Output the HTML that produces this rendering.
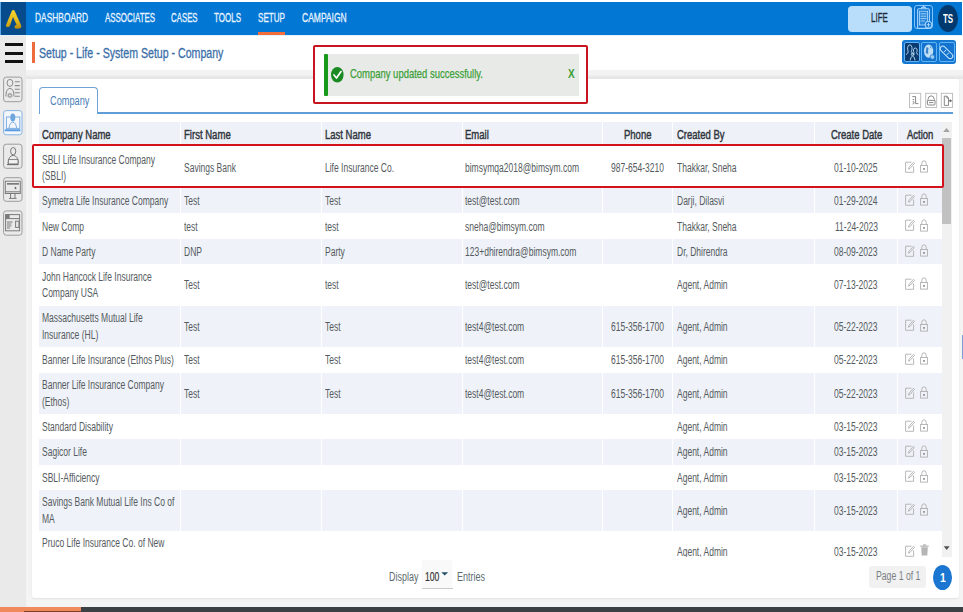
<!DOCTYPE html>
<html><head><meta charset="utf-8">
<style>
html,body{margin:0;padding:0;}
body{width:963px;height:612px;overflow:hidden;position:relative;background:#ffffff;font-family:"Liberation Sans",sans-serif;}
.a{position:absolute;}
.t{position:absolute;white-space:nowrap;line-height:1;transform-origin:0 0;font-family:"Liberation Sans",sans-serif;}
svg{position:absolute;overflow:visible;}
</style></head><body>
<!-- main gray background -->
<div class="a" style="left:26px;top:70px;width:937px;height:542px;background:#f4f4f4"></div>
<div class="a" style="left:26px;top:70px;width:937px;height:9px;background:linear-gradient(#f4f4f4,#f1f1f1 55%,#e5e5e5 85%,#e9e9e9)"></div>
<!-- navbar -->
<div class="a" style="left:0;top:2px;width:961.5px;height:32.6px;background:#0277d4"></div>
<div class="a" style="left:0;top:34.6px;width:963px;height:1.4px;background:#e3f1fc"></div>
<div class="a" style="left:0;top:2px;width:1.2px;height:33px;background:#5aa8e8"></div>
<div class="a" style="left:1.2px;top:2px;width:24.8px;height:32.6px;background:#064b8c"></div>
<svg style="left:0;top:0" width="26" height="34" viewBox="0 0 26 34">
 <defs><linearGradient id="gA" x1="0" y1="0" x2="0" y2="1"><stop offset="0" stop-color="#f6d62c"/><stop offset="0.6" stop-color="#e2b91c"/><stop offset="1" stop-color="#b98a10"/></linearGradient></defs>
 <path d="M12.0 10.6 Q13.2 9.2 14.5 10.6 L21.2 25.6 Q21.8 28.2 19.6 28.5 L16.6 28.7 Q14.4 28.7 14.4 26.9 Q14.5 25.2 16.6 25.0 L13.0 16.9 L10.0 25.4 Q9.5 26.9 7.9 27.1 Q5.4 27.3 5.9 25.3 Z" fill="url(#gA)"/>
</svg>
<div class="a" style="left:258.4px;top:31.6px;width:26.8px;height:3.2px;background:#f26d3a"></div>
<div class="a" style="left:848px;top:6px;width:64px;height:26px;background:#b9defb;border-radius:4px"></div>
<div class="a" style="left:914.4px;top:4.6px;width:16.2px;height:22.9px;border:1.7px solid #80c3fb;border-radius:3px;background:#0b74d2"></div>
<svg style="left:908px;top:2px" width="30" height="32" viewBox="908 2 30 32">
 <g fill="none" stroke="#a6d6ff" stroke-width="1.1">
  <rect x="917.6" y="8.8" width="11.8" height="19.6" rx="1.2"/>
  <path d="M921 8.8 L922 7.4 L923 7.4 L923.6 6 L924.3 7.4 L925.3 7.4 L926.2 8.8"/>
 </g>
 <rect x="919.4" y="11.2" width="8.2" height="13.8" fill="#2a86d8" stroke="#a6d6ff" stroke-width="0.9"/>
 <path d="M920.6 13.8h5.8 M920.6 16.2h5.8 M920.6 18.6h5.8 M920.6 21h4" stroke="#a6d6ff" stroke-width="0.9"/>
 <circle cx="928.5" cy="24.8" r="3.3" fill="#0b74d2" stroke="#a6d6ff" stroke-width="1.1"/>
 <path d="M928.5 22.9v3.8 M926.6 24.8h3.8" stroke="#a6d6ff" stroke-width="1"/>
</svg>
<div class="a" style="left:938.2px;top:5px;width:20px;height:27px;border-radius:50%;background:#023a6f"></div>

<!-- sidebar -->
<div class="a" style="left:0;top:36px;width:26px;height:571.4px;background:#eaeaea"></div>
<div class="a" style="left:4.5px;top:43.3px;width:18.7px;height:3.2px;background:#111"></div>
<div class="a" style="left:4.5px;top:51.8px;width:18.7px;height:3.2px;background:#111"></div>
<div class="a" style="left:4.5px;top:60.3px;width:18.7px;height:3.2px;background:#111"></div>
<!-- sidebar icons -->
<svg style="left:0;top:70px" width="26" height="170" viewBox="0 70 26 170">
 <g fill="none" stroke="#9c9c9c" stroke-width="1">
  <rect x="3.6" y="77.1" width="18.4" height="24.6" rx="2.6"/>
  <rect x="3.6" y="144.2" width="18.4" height="24.1" rx="2.6"/>
  <rect x="3.6" y="177.7" width="18.4" height="23.6" rx="2.6"/>
  <rect x="3.6" y="210.9" width="18.4" height="24.3" rx="2.6"/>
 </g>
 <rect x="3.6" y="110.6" width="18.4" height="24.2" rx="2.6" fill="#f3f6fa" stroke="#86b3e3" stroke-width="1"/>
 <!-- icon1 -->
 <g fill="none" stroke="#8a8a8a" stroke-width="1">
  <ellipse cx="9.95" cy="82.9" rx="2.9" ry="3.5"/>
  <path d="M5.9 96.5 Q5.9 88.6 9.95 88.4 Q14 88.6 14 96.5"/>
  <path d="M14.8 81.8h5 M14.8 85.6h5 M14.8 89.2h5 M14.8 92.8h5 M14.8 96.2h5" stroke-width="1.1"/>
 </g>
 <circle cx="9.9" cy="95.4" r="2.6" fill="#9a9a9a" stroke="#eaeaea" stroke-width="0.6"/>
 <circle cx="9.9" cy="95.4" r="1" fill="#eaeaea"/>
 <!-- icon2 -->
 <rect x="6.4" y="117" width="13.4" height="11.4" fill="none" stroke="#7fb0e4" stroke-width="1"/>
 <ellipse cx="12.8" cy="117.6" rx="2.5" ry="4" fill="#6fa5de"/>
 <path d="M9 128.2 Q9.6 122.4 12.8 122.2 Q16 122.4 16.6 128.2" fill="none" stroke="#7fb0e4" stroke-width="1"/>
 <rect x="4.7" y="129.2" width="15.7" height="2.1" fill="#5c9de2"/>
 <!-- icon3 -->
 <g fill="none" stroke="#7a7a7a" stroke-width="1">
  <ellipse cx="13.2" cy="151.2" rx="2.6" ry="3.7"/>
  <path d="M8 163.5 Q8.5 155.5 13.2 155.3 Q17.9 155.5 18.4 163.5"/>
 </g>
 <rect x="8.4" y="159.6" width="9.6" height="4.3" fill="#f2f2f2" stroke="#7a7a7a" stroke-width="0.9"/>
 <path d="M7 164.6h11.5" stroke="#6a6a6a" stroke-width="1.1"/>
 <!-- icon4 -->
 <g fill="none" stroke="#7a7a7a" stroke-width="1">
  <rect x="5.3" y="181.2" width="15" height="12.3"/>
  <path d="M5.3 191.8h15 M10.6 193.5v4.6 M15 193.5v4.6 M9 198.4h7.6"/>
 </g>
 <rect x="7" y="183" width="12" height="1.7" fill="#7a7a7a"/>
 <path d="M14.8 186.6 l2 1.4 -0.9 0.4 0.5 0.9 -0.5 0.2 -0.5 -0.9 -0.6 0.7z" fill="#555"/>
 <!-- icon5 -->
 <g fill="none" stroke="#7a7a7a" stroke-width="1">
  <rect x="5.6" y="214.6" width="14" height="16.2"/>
  <path d="M5.6 218.6h14"/>
  <rect x="15.6" y="221.2" width="3.3" height="6.2"/>
  <path d="M6.9 222h5.8 M6.9 224h4.5 M6.9 226h4.5 M6.9 228h3"/>
 </g>
 <rect x="5.6" y="214.6" width="4" height="4" fill="#7a7a7a"/>
</svg>
<!-- breadcrumb -->
<div class="a" style="left:32.1px;top:41.8px;width:3.3px;height:21.5px;background:#ee6b3b"></div>
<!-- top right icon group -->
<div class="a" style="left:902px;top:40px;width:54px;height:24px;background:#1477d2;border-radius:3px"></div>
<div class="a" style="left:904.1px;top:41.8px;width:13.5px;height:18.7px;border:1px solid #5eb4f6;border-radius:2px;background:#0a3a70"></div>
<div class="a" style="left:921.4px;top:41.8px;width:13.6px;height:18.7px;border:1px solid #5eb4f6;border-radius:2px;background:#1373cf"></div>
<div class="a" style="left:939.2px;top:41.8px;width:13.6px;height:18.7px;border:1px solid #5eb4f6;border-radius:2px;background:#1373cf"></div>
<svg style="left:898px;top:36px" width="62" height="30" viewBox="898 36 62 30">
 <g fill="none" stroke="#b9dcf0" stroke-width="0.9" stroke-linecap="round">
  <path d="M906.3 54.5 Q908.2 53.5 908.2 51.5 Q907.4 50 907.6 47.6 Q908 44.8 909.8 44.8 Q911.6 44.8 912 47.6 Q912.2 50 911.4 51.5 Q911.6 53 913 53.8"/>
  <path d="M912.8 55 Q914 54 914 52.6 Q913.3 51.6 913.5 49.8 Q913.8 48 915.3 48 Q916.8 48 917.1 49.8 Q917.3 51.6 916.6 52.6 Q916.6 54 918 54.8"/>
  <path d="M910.2 60 Q910.4 56.6 912.6 56.2 Q914.8 56.6 915 60"/>
  <circle cx="912.6" cy="54.3" r="1.3"/>
 </g>
 <ellipse cx="928.6" cy="51.2" rx="4.6" ry="6.6" fill="#bfdff5"/>
 <path d="M926.3 47.5 Q927.8 46.6 928.6 48.6 Q927.6 50.8 928.4 53.2 Q926.8 54.6 925.6 52.2 Q926.2 50 926.3 47.5Z M929.9 46 Q931.6 46.8 931.4 48.8 Q930.2 48.2 929.9 46Z" fill="#3d86cc"/>
 <circle cx="932.4" cy="57" r="2.3" fill="#9fcdf0" stroke="#1373cf" stroke-width="0.7"/>
 <g transform="rotate(-45 946.5 52.4)">
  <rect x="943.9" y="44.6" width="5.2" height="15.6" rx="2.6" fill="none" stroke="#c8e6fa" stroke-width="1"/>
  <path d="M944.9 50.4h3.2 M944.9 54.4h3.2" stroke="#c8e6fa" stroke-width="0.9"/>
 </g>
</svg>

<!-- panel -->
<div class="a" style="left:32.3px;top:79px;width:926.5px;height:519px;background:#ffffff;border-radius:3px;box-shadow:0 1px 2px rgba(0,0,0,0.08)"></div>
<!-- tab -->
<div class="a" style="left:38.9px;top:87.2px;width:57.3px;height:26px;border:1.5px solid #6fa3d6;border-bottom:none;border-radius:4px 4px 0 0;background:#fff"></div>
<div class="a" style="left:97.5px;top:112.1px;width:855px;height:1.6px;background:#5e9dd6"></div>
<!-- small panel icons -->
<svg style="left:900px;top:88px" width="60" height="24" viewBox="900 88 60 24">
 <g fill="none" stroke="#b9b9b9" stroke-width="0.9">
  <rect x="909.5" y="93.3" width="11.2" height="14.2"/>
  <rect x="925.7" y="93.3" width="11" height="14.2"/>
  <rect x="941.3" y="93.3" width="11.3" height="14.2"/>
 </g>
 <g fill="none" stroke="#7c7c7c" stroke-width="0.9">
  <path d="M912.3 96.6 L915.6 96.6 L915.6 103.6 L918.4 103.6 M912.6 99.6 L914.2 99.6 M914.2 101.8 L912.6 101.8 M913 104.4 Q913 102.8 914.6 102.8"/>
  <path d="M927.9 99.6 Q928.3 95.8 931.2 95.8 Q934 95.8 934.4 99.6 M927.4 100.4 h7.6 v3.6 q0 1 -1 1 h-5.6 q-1 0 -1 -1z M929 102.6 h4.4"/>
  <path d="M944.3 96.2 h2.6 l1.6 1.8 v7.4 h-4.2z M946.9 96.2 v1.8 h1.6"/>
 </g>
 <path d="M948.8 100.8 h1.8 M950.2 99.8 l1.4 1 -1.4 1z" stroke="#666" stroke-width="0.9" fill="#666"/>
</svg>

<!-- table -->
<div class="a" style="left:32px;top:121.5px;width:911px;height:435.8px;overflow:hidden">
 <div class="a" style="left:7px;top:0;width:904px;height:24px;background:#eef1f8"></div>
 <div class="a" style="left:148.00px;top:0px;width:1px;height:24px;background:#ffffff"></div>
<div class="a" style="left:288.50px;top:0px;width:1px;height:24px;background:#ffffff"></div>
<div class="a" style="left:429.50px;top:0px;width:1px;height:24px;background:#ffffff"></div>
<div class="a" style="left:570.00px;top:0px;width:1px;height:24px;background:#ffffff"></div>
<div class="a" style="left:640.00px;top:0px;width:1px;height:24px;background:#ffffff"></div>
<div class="a" style="left:782.30px;top:0px;width:1px;height:24px;background:#ffffff"></div>
<div class="a" style="left:865.30px;top:0px;width:1px;height:24px;background:#ffffff"></div>
<div class="a" style="left:148.00px;top:25.90px;width:1px;height:40.40px;background:#ffffff"></div>
<div class="a" style="left:288.50px;top:25.90px;width:1px;height:40.40px;background:#ffffff"></div>
<div class="a" style="left:429.50px;top:25.90px;width:1px;height:40.40px;background:#ffffff"></div>
<div class="a" style="left:570.00px;top:25.90px;width:1px;height:40.40px;background:#ffffff"></div>
<div class="a" style="left:640.00px;top:25.90px;width:1px;height:40.40px;background:#ffffff"></div>
<div class="a" style="left:782.30px;top:25.90px;width:1px;height:40.40px;background:#ffffff"></div>
<div class="a" style="left:865.30px;top:25.90px;width:1px;height:40.40px;background:#ffffff"></div>
<svg style="left:873.30px;top:39.20px" width="10" height="12" viewBox="0 0 10 12"><g fill="none" stroke="#ababab" stroke-width="0.85"><path d="M6.5 1.2 H0.6 V11.3 H8.6 V5.5"/><path d="M3.5 8.2 L4 6.3 L8.4 1.3 L9.5 2.3 L5.1 7.4 Z"/></g></svg>
<svg style="left:888.30px;top:38.70px" width="8" height="13" viewBox="0 0 8 13"><g fill="none" stroke="#ababab" stroke-width="0.85"><path d="M1.8 5.5 V3.4 Q1.8 0.8 4 0.8 Q6.2 0.8 6.2 3.4 V5.5"/><rect x="0.6" y="5.5" width="6.8" height="6.6"/></g><rect x="3.3" y="8" width="1.4" height="1.8" fill="#777"/></svg>
<div class="a" style="left:7.00px;top:66.30px;width:904.00px;height:25.70px;background:#eff2f8"></div>
<div class="a" style="left:148.00px;top:66.30px;width:1px;height:25.70px;background:#ffffff"></div>
<div class="a" style="left:288.50px;top:66.30px;width:1px;height:25.70px;background:#ffffff"></div>
<div class="a" style="left:429.50px;top:66.30px;width:1px;height:25.70px;background:#ffffff"></div>
<div class="a" style="left:570.00px;top:66.30px;width:1px;height:25.70px;background:#ffffff"></div>
<div class="a" style="left:640.00px;top:66.30px;width:1px;height:25.70px;background:#ffffff"></div>
<div class="a" style="left:782.30px;top:66.30px;width:1px;height:25.70px;background:#ffffff"></div>
<div class="a" style="left:865.30px;top:66.30px;width:1px;height:25.70px;background:#ffffff"></div>
<svg style="left:873.30px;top:72.25px" width="10" height="12" viewBox="0 0 10 12"><g fill="none" stroke="#ababab" stroke-width="0.85"><path d="M6.5 1.2 H0.6 V11.3 H8.6 V5.5"/><path d="M3.5 8.2 L4 6.3 L8.4 1.3 L9.5 2.3 L5.1 7.4 Z"/></g></svg>
<svg style="left:888.30px;top:71.75px" width="8" height="13" viewBox="0 0 8 13"><g fill="none" stroke="#ababab" stroke-width="0.85"><path d="M1.8 5.5 V3.4 Q1.8 0.8 4 0.8 Q6.2 0.8 6.2 3.4 V5.5"/><rect x="0.6" y="5.5" width="6.8" height="6.6"/></g><rect x="3.3" y="8" width="1.4" height="1.8" fill="#777"/></svg>
<div class="a" style="left:148.00px;top:92.00px;width:1px;height:25.30px;background:#ffffff"></div>
<div class="a" style="left:288.50px;top:92.00px;width:1px;height:25.30px;background:#ffffff"></div>
<div class="a" style="left:429.50px;top:92.00px;width:1px;height:25.30px;background:#ffffff"></div>
<div class="a" style="left:570.00px;top:92.00px;width:1px;height:25.30px;background:#ffffff"></div>
<div class="a" style="left:640.00px;top:92.00px;width:1px;height:25.30px;background:#ffffff"></div>
<div class="a" style="left:782.30px;top:92.00px;width:1px;height:25.30px;background:#ffffff"></div>
<div class="a" style="left:865.30px;top:92.00px;width:1px;height:25.30px;background:#ffffff"></div>
<svg style="left:873.30px;top:97.75px" width="10" height="12" viewBox="0 0 10 12"><g fill="none" stroke="#ababab" stroke-width="0.85"><path d="M6.5 1.2 H0.6 V11.3 H8.6 V5.5"/><path d="M3.5 8.2 L4 6.3 L8.4 1.3 L9.5 2.3 L5.1 7.4 Z"/></g></svg>
<svg style="left:888.30px;top:97.25px" width="8" height="13" viewBox="0 0 8 13"><g fill="none" stroke="#ababab" stroke-width="0.85"><path d="M1.8 5.5 V3.4 Q1.8 0.8 4 0.8 Q6.2 0.8 6.2 3.4 V5.5"/><rect x="0.6" y="5.5" width="6.8" height="6.6"/></g><rect x="3.3" y="8" width="1.4" height="1.8" fill="#777"/></svg>
<div class="a" style="left:7.00px;top:117.30px;width:904.00px;height:25.40px;background:#eff2f8"></div>
<div class="a" style="left:148.00px;top:117.30px;width:1px;height:25.40px;background:#ffffff"></div>
<div class="a" style="left:288.50px;top:117.30px;width:1px;height:25.40px;background:#ffffff"></div>
<div class="a" style="left:429.50px;top:117.30px;width:1px;height:25.40px;background:#ffffff"></div>
<div class="a" style="left:570.00px;top:117.30px;width:1px;height:25.40px;background:#ffffff"></div>
<div class="a" style="left:640.00px;top:117.30px;width:1px;height:25.40px;background:#ffffff"></div>
<div class="a" style="left:782.30px;top:117.30px;width:1px;height:25.40px;background:#ffffff"></div>
<div class="a" style="left:865.30px;top:117.30px;width:1px;height:25.40px;background:#ffffff"></div>
<svg style="left:873.30px;top:123.10px" width="10" height="12" viewBox="0 0 10 12"><g fill="none" stroke="#ababab" stroke-width="0.85"><path d="M6.5 1.2 H0.6 V11.3 H8.6 V5.5"/><path d="M3.5 8.2 L4 6.3 L8.4 1.3 L9.5 2.3 L5.1 7.4 Z"/></g></svg>
<svg style="left:888.30px;top:122.60px" width="8" height="13" viewBox="0 0 8 13"><g fill="none" stroke="#ababab" stroke-width="0.85"><path d="M1.8 5.5 V3.4 Q1.8 0.8 4 0.8 Q6.2 0.8 6.2 3.4 V5.5"/><rect x="0.6" y="5.5" width="6.8" height="6.6"/></g><rect x="3.3" y="8" width="1.4" height="1.8" fill="#777"/></svg>
<div class="a" style="left:148.00px;top:142.70px;width:1px;height:41.30px;background:#ffffff"></div>
<div class="a" style="left:288.50px;top:142.70px;width:1px;height:41.30px;background:#ffffff"></div>
<div class="a" style="left:429.50px;top:142.70px;width:1px;height:41.30px;background:#ffffff"></div>
<div class="a" style="left:570.00px;top:142.70px;width:1px;height:41.30px;background:#ffffff"></div>
<div class="a" style="left:640.00px;top:142.70px;width:1px;height:41.30px;background:#ffffff"></div>
<div class="a" style="left:782.30px;top:142.70px;width:1px;height:41.30px;background:#ffffff"></div>
<div class="a" style="left:865.30px;top:142.70px;width:1px;height:41.30px;background:#ffffff"></div>
<svg style="left:873.30px;top:156.45px" width="10" height="12" viewBox="0 0 10 12"><g fill="none" stroke="#ababab" stroke-width="0.85"><path d="M6.5 1.2 H0.6 V11.3 H8.6 V5.5"/><path d="M3.5 8.2 L4 6.3 L8.4 1.3 L9.5 2.3 L5.1 7.4 Z"/></g></svg>
<svg style="left:888.30px;top:155.95px" width="8" height="13" viewBox="0 0 8 13"><g fill="none" stroke="#ababab" stroke-width="0.85"><path d="M1.8 5.5 V3.4 Q1.8 0.8 4 0.8 Q6.2 0.8 6.2 3.4 V5.5"/><rect x="0.6" y="5.5" width="6.8" height="6.6"/></g><rect x="3.3" y="8" width="1.4" height="1.8" fill="#777"/></svg>
<div class="a" style="left:7.00px;top:184.00px;width:904.00px;height:41.50px;background:#eff2f8"></div>
<div class="a" style="left:148.00px;top:184.00px;width:1px;height:41.50px;background:#ffffff"></div>
<div class="a" style="left:288.50px;top:184.00px;width:1px;height:41.50px;background:#ffffff"></div>
<div class="a" style="left:429.50px;top:184.00px;width:1px;height:41.50px;background:#ffffff"></div>
<div class="a" style="left:570.00px;top:184.00px;width:1px;height:41.50px;background:#ffffff"></div>
<div class="a" style="left:640.00px;top:184.00px;width:1px;height:41.50px;background:#ffffff"></div>
<div class="a" style="left:782.30px;top:184.00px;width:1px;height:41.50px;background:#ffffff"></div>
<div class="a" style="left:865.30px;top:184.00px;width:1px;height:41.50px;background:#ffffff"></div>
<svg style="left:873.30px;top:197.85px" width="10" height="12" viewBox="0 0 10 12"><g fill="none" stroke="#ababab" stroke-width="0.85"><path d="M6.5 1.2 H0.6 V11.3 H8.6 V5.5"/><path d="M3.5 8.2 L4 6.3 L8.4 1.3 L9.5 2.3 L5.1 7.4 Z"/></g></svg>
<svg style="left:888.30px;top:197.35px" width="8" height="13" viewBox="0 0 8 13"><g fill="none" stroke="#ababab" stroke-width="0.85"><path d="M1.8 5.5 V3.4 Q1.8 0.8 4 0.8 Q6.2 0.8 6.2 3.4 V5.5"/><rect x="0.6" y="5.5" width="6.8" height="6.6"/></g><rect x="3.3" y="8" width="1.4" height="1.8" fill="#777"/></svg>
<div class="a" style="left:148.00px;top:225.50px;width:1px;height:25.70px;background:#ffffff"></div>
<div class="a" style="left:288.50px;top:225.50px;width:1px;height:25.70px;background:#ffffff"></div>
<div class="a" style="left:429.50px;top:225.50px;width:1px;height:25.70px;background:#ffffff"></div>
<div class="a" style="left:570.00px;top:225.50px;width:1px;height:25.70px;background:#ffffff"></div>
<div class="a" style="left:640.00px;top:225.50px;width:1px;height:25.70px;background:#ffffff"></div>
<div class="a" style="left:782.30px;top:225.50px;width:1px;height:25.70px;background:#ffffff"></div>
<div class="a" style="left:865.30px;top:225.50px;width:1px;height:25.70px;background:#ffffff"></div>
<svg style="left:873.30px;top:231.45px" width="10" height="12" viewBox="0 0 10 12"><g fill="none" stroke="#ababab" stroke-width="0.85"><path d="M6.5 1.2 H0.6 V11.3 H8.6 V5.5"/><path d="M3.5 8.2 L4 6.3 L8.4 1.3 L9.5 2.3 L5.1 7.4 Z"/></g></svg>
<svg style="left:888.30px;top:230.95px" width="8" height="13" viewBox="0 0 8 13"><g fill="none" stroke="#ababab" stroke-width="0.85"><path d="M1.8 5.5 V3.4 Q1.8 0.8 4 0.8 Q6.2 0.8 6.2 3.4 V5.5"/><rect x="0.6" y="5.5" width="6.8" height="6.6"/></g><rect x="3.3" y="8" width="1.4" height="1.8" fill="#777"/></svg>
<div class="a" style="left:7.00px;top:251.20px;width:904.00px;height:41.50px;background:#eff2f8"></div>
<div class="a" style="left:148.00px;top:251.20px;width:1px;height:41.50px;background:#ffffff"></div>
<div class="a" style="left:288.50px;top:251.20px;width:1px;height:41.50px;background:#ffffff"></div>
<div class="a" style="left:429.50px;top:251.20px;width:1px;height:41.50px;background:#ffffff"></div>
<div class="a" style="left:570.00px;top:251.20px;width:1px;height:41.50px;background:#ffffff"></div>
<div class="a" style="left:640.00px;top:251.20px;width:1px;height:41.50px;background:#ffffff"></div>
<div class="a" style="left:782.30px;top:251.20px;width:1px;height:41.50px;background:#ffffff"></div>
<div class="a" style="left:865.30px;top:251.20px;width:1px;height:41.50px;background:#ffffff"></div>
<svg style="left:873.30px;top:265.05px" width="10" height="12" viewBox="0 0 10 12"><g fill="none" stroke="#ababab" stroke-width="0.85"><path d="M6.5 1.2 H0.6 V11.3 H8.6 V5.5"/><path d="M3.5 8.2 L4 6.3 L8.4 1.3 L9.5 2.3 L5.1 7.4 Z"/></g></svg>
<svg style="left:888.30px;top:264.55px" width="8" height="13" viewBox="0 0 8 13"><g fill="none" stroke="#ababab" stroke-width="0.85"><path d="M1.8 5.5 V3.4 Q1.8 0.8 4 0.8 Q6.2 0.8 6.2 3.4 V5.5"/><rect x="0.6" y="5.5" width="6.8" height="6.6"/></g><rect x="3.3" y="8" width="1.4" height="1.8" fill="#777"/></svg>
<div class="a" style="left:148.00px;top:292.70px;width:1px;height:25.10px;background:#ffffff"></div>
<div class="a" style="left:288.50px;top:292.70px;width:1px;height:25.10px;background:#ffffff"></div>
<div class="a" style="left:429.50px;top:292.70px;width:1px;height:25.10px;background:#ffffff"></div>
<div class="a" style="left:570.00px;top:292.70px;width:1px;height:25.10px;background:#ffffff"></div>
<div class="a" style="left:640.00px;top:292.70px;width:1px;height:25.10px;background:#ffffff"></div>
<div class="a" style="left:782.30px;top:292.70px;width:1px;height:25.10px;background:#ffffff"></div>
<div class="a" style="left:865.30px;top:292.70px;width:1px;height:25.10px;background:#ffffff"></div>
<svg style="left:873.30px;top:298.35px" width="10" height="12" viewBox="0 0 10 12"><g fill="none" stroke="#ababab" stroke-width="0.85"><path d="M6.5 1.2 H0.6 V11.3 H8.6 V5.5"/><path d="M3.5 8.2 L4 6.3 L8.4 1.3 L9.5 2.3 L5.1 7.4 Z"/></g></svg>
<svg style="left:888.30px;top:297.85px" width="8" height="13" viewBox="0 0 8 13"><g fill="none" stroke="#ababab" stroke-width="0.85"><path d="M1.8 5.5 V3.4 Q1.8 0.8 4 0.8 Q6.2 0.8 6.2 3.4 V5.5"/><rect x="0.6" y="5.5" width="6.8" height="6.6"/></g><rect x="3.3" y="8" width="1.4" height="1.8" fill="#777"/></svg>
<div class="a" style="left:7.00px;top:317.80px;width:904.00px;height:25.30px;background:#eff2f8"></div>
<div class="a" style="left:148.00px;top:317.80px;width:1px;height:25.30px;background:#ffffff"></div>
<div class="a" style="left:288.50px;top:317.80px;width:1px;height:25.30px;background:#ffffff"></div>
<div class="a" style="left:429.50px;top:317.80px;width:1px;height:25.30px;background:#ffffff"></div>
<div class="a" style="left:570.00px;top:317.80px;width:1px;height:25.30px;background:#ffffff"></div>
<div class="a" style="left:640.00px;top:317.80px;width:1px;height:25.30px;background:#ffffff"></div>
<div class="a" style="left:782.30px;top:317.80px;width:1px;height:25.30px;background:#ffffff"></div>
<div class="a" style="left:865.30px;top:317.80px;width:1px;height:25.30px;background:#ffffff"></div>
<svg style="left:873.30px;top:323.55px" width="10" height="12" viewBox="0 0 10 12"><g fill="none" stroke="#ababab" stroke-width="0.85"><path d="M6.5 1.2 H0.6 V11.3 H8.6 V5.5"/><path d="M3.5 8.2 L4 6.3 L8.4 1.3 L9.5 2.3 L5.1 7.4 Z"/></g></svg>
<svg style="left:888.30px;top:323.05px" width="8" height="13" viewBox="0 0 8 13"><g fill="none" stroke="#ababab" stroke-width="0.85"><path d="M1.8 5.5 V3.4 Q1.8 0.8 4 0.8 Q6.2 0.8 6.2 3.4 V5.5"/><rect x="0.6" y="5.5" width="6.8" height="6.6"/></g><rect x="3.3" y="8" width="1.4" height="1.8" fill="#777"/></svg>
<div class="a" style="left:148.00px;top:343.10px;width:1px;height:25.30px;background:#ffffff"></div>
<div class="a" style="left:288.50px;top:343.10px;width:1px;height:25.30px;background:#ffffff"></div>
<div class="a" style="left:429.50px;top:343.10px;width:1px;height:25.30px;background:#ffffff"></div>
<div class="a" style="left:570.00px;top:343.10px;width:1px;height:25.30px;background:#ffffff"></div>
<div class="a" style="left:640.00px;top:343.10px;width:1px;height:25.30px;background:#ffffff"></div>
<div class="a" style="left:782.30px;top:343.10px;width:1px;height:25.30px;background:#ffffff"></div>
<div class="a" style="left:865.30px;top:343.10px;width:1px;height:25.30px;background:#ffffff"></div>
<svg style="left:873.30px;top:348.85px" width="10" height="12" viewBox="0 0 10 12"><g fill="none" stroke="#ababab" stroke-width="0.85"><path d="M6.5 1.2 H0.6 V11.3 H8.6 V5.5"/><path d="M3.5 8.2 L4 6.3 L8.4 1.3 L9.5 2.3 L5.1 7.4 Z"/></g></svg>
<svg style="left:888.30px;top:348.35px" width="8" height="13" viewBox="0 0 8 13"><g fill="none" stroke="#ababab" stroke-width="0.85"><path d="M1.8 5.5 V3.4 Q1.8 0.8 4 0.8 Q6.2 0.8 6.2 3.4 V5.5"/><rect x="0.6" y="5.5" width="6.8" height="6.6"/></g><rect x="3.3" y="8" width="1.4" height="1.8" fill="#777"/></svg>
<div class="a" style="left:7.00px;top:368.40px;width:904.00px;height:40.90px;background:#eff2f8"></div>
<div class="a" style="left:148.00px;top:368.40px;width:1px;height:40.90px;background:#ffffff"></div>
<div class="a" style="left:288.50px;top:368.40px;width:1px;height:40.90px;background:#ffffff"></div>
<div class="a" style="left:429.50px;top:368.40px;width:1px;height:40.90px;background:#ffffff"></div>
<div class="a" style="left:570.00px;top:368.40px;width:1px;height:40.90px;background:#ffffff"></div>
<div class="a" style="left:640.00px;top:368.40px;width:1px;height:40.90px;background:#ffffff"></div>
<div class="a" style="left:782.30px;top:368.40px;width:1px;height:40.90px;background:#ffffff"></div>
<div class="a" style="left:865.30px;top:368.40px;width:1px;height:40.90px;background:#ffffff"></div>
<svg style="left:873.30px;top:381.95px" width="10" height="12" viewBox="0 0 10 12"><g fill="none" stroke="#ababab" stroke-width="0.85"><path d="M6.5 1.2 H0.6 V11.3 H8.6 V5.5"/><path d="M3.5 8.2 L4 6.3 L8.4 1.3 L9.5 2.3 L5.1 7.4 Z"/></g></svg>
<svg style="left:888.30px;top:381.45px" width="8" height="13" viewBox="0 0 8 13"><g fill="none" stroke="#ababab" stroke-width="0.85"><path d="M1.8 5.5 V3.4 Q1.8 0.8 4 0.8 Q6.2 0.8 6.2 3.4 V5.5"/><rect x="0.6" y="5.5" width="6.8" height="6.6"/></g><rect x="3.3" y="8" width="1.4" height="1.8" fill="#777"/></svg>
<div class="a" style="left:148.00px;top:409.30px;width:1px;height:41.20px;background:#ffffff"></div>
<div class="a" style="left:288.50px;top:409.30px;width:1px;height:41.20px;background:#ffffff"></div>
<div class="a" style="left:429.50px;top:409.30px;width:1px;height:41.20px;background:#ffffff"></div>
<div class="a" style="left:570.00px;top:409.30px;width:1px;height:41.20px;background:#ffffff"></div>
<div class="a" style="left:640.00px;top:409.30px;width:1px;height:41.20px;background:#ffffff"></div>
<div class="a" style="left:782.30px;top:409.30px;width:1px;height:41.20px;background:#ffffff"></div>
<div class="a" style="left:865.30px;top:409.30px;width:1px;height:41.20px;background:#ffffff"></div>
<svg style="left:873.30px;top:423.00px" width="10" height="12" viewBox="0 0 10 12"><g fill="none" stroke="#ababab" stroke-width="0.85"><path d="M6.5 1.2 H0.6 V11.3 H8.6 V5.5"/><path d="M3.5 8.2 L4 6.3 L8.4 1.3 L9.5 2.3 L5.1 7.4 Z"/></g></svg>
<svg style="left:888.30px;top:422.50px" width="9" height="12" viewBox="0 0 9 12"><g fill="#b5b5b5"><rect x="0.3" y="1.5" width="8.4" height="1.3"/><rect x="3" y="0.3" width="3" height="1.3"/><path d="M1.2 3.3 H7.8 L7.3 11.5 H1.7 Z"/></g></svg>
<div class="t" style="left:10.20px;top:6.50px;font-size:13px;color:#30363c;transform:scaleX(0.7303);-webkit-text-stroke:0.45px currentColor;">Company Name</div>
<div class="t" style="left:151.50px;top:6.50px;font-size:13px;color:#30363c;transform:scaleX(0.7347);-webkit-text-stroke:0.45px currentColor;">First Name</div>
<div class="t" style="left:292.50px;top:6.50px;font-size:13px;color:#30363c;transform:scaleX(0.7303);-webkit-text-stroke:0.45px currentColor;">Last Name</div>
<div class="t" style="left:433.00px;top:6.50px;font-size:13px;color:#30363c;transform:scaleX(0.7303);-webkit-text-stroke:0.45px currentColor;">Email</div>
<div class="t" style="left:592.47px;top:6.50px;font-size:13px;color:#30363c;transform:scaleX(0.7303);-webkit-text-stroke:0.45px currentColor;">Phone</div>
<div class="t" style="left:645.00px;top:6.50px;font-size:13px;color:#30363c;transform:scaleX(0.7303);-webkit-text-stroke:0.45px currentColor;">Created By</div>
<div class="t" style="left:798.71px;top:6.50px;font-size:13px;color:#30363c;transform:scaleX(0.7303);-webkit-text-stroke:0.45px currentColor;">Create Date</div>
<div class="t" style="left:874.60px;top:6.50px;font-size:13px;color:#30363c;transform:scaleX(0.7303);-webkit-text-stroke:0.45px currentColor;">Action</div>
<div class="t" style="left:10.20px;top:32.10px;font-size:12.5px;color:#555b60;transform:scaleX(0.6803);">SBLI Life Insurance Company</div>
<div class="t" style="left:10.20px;top:48.50px;font-size:12.5px;color:#555b60;transform:scaleX(0.6803);">(SBLI)</div>
<div class="t" style="left:151.80px;top:40.50px;font-size:12.5px;color:#555b60;transform:scaleX(0.6803);">Savings Bank</div>
<div class="t" style="left:292.50px;top:40.50px;font-size:12.5px;color:#555b60;transform:scaleX(0.6803);">Life Insurance Co.</div>
<div class="t" style="left:433.30px;top:40.50px;font-size:12.5px;color:#555b60;transform:scaleX(0.6803);">bimsymqa2018@bimsym.com</div>
<div class="t" style="left:579.32px;top:40.50px;font-size:12.5px;color:#555b60;transform:scaleX(0.6803);">987-654-3210</div>
<div class="t" style="left:645.00px;top:40.50px;font-size:12.5px;color:#555b60;transform:scaleX(0.6803);">Thakkar, Sneha</div>
<div class="t" style="left:802.45px;top:40.50px;font-size:12.5px;color:#555b60;transform:scaleX(0.6803);">01-10-2025</div>
<div class="t" style="left:10.20px;top:73.55px;font-size:12.5px;color:#555b60;transform:scaleX(0.6803);">Symetra Life Insurance Company</div>
<div class="t" style="left:151.80px;top:73.55px;font-size:12.5px;color:#555b60;transform:scaleX(0.6803);">Test</div>
<div class="t" style="left:292.50px;top:73.55px;font-size:12.5px;color:#555b60;transform:scaleX(0.6803);">Test</div>
<div class="t" style="left:433.30px;top:73.55px;font-size:12.5px;color:#555b60;transform:scaleX(0.6803);">test@test.com</div>
<div class="t" style="left:645.00px;top:73.55px;font-size:12.5px;color:#555b60;transform:scaleX(0.6803);">Darji, Dilasvi</div>
<div class="t" style="left:802.45px;top:73.55px;font-size:12.5px;color:#555b60;transform:scaleX(0.6803);">01-29-2024</div>
<div class="t" style="left:10.20px;top:99.05px;font-size:12.5px;color:#555b60;transform:scaleX(0.6803);">New Comp</div>
<div class="t" style="left:151.80px;top:99.05px;font-size:12.5px;color:#555b60;transform:scaleX(0.6803);">test</div>
<div class="t" style="left:292.50px;top:99.05px;font-size:12.5px;color:#555b60;transform:scaleX(0.6803);">test</div>
<div class="t" style="left:433.30px;top:99.05px;font-size:12.5px;color:#555b60;transform:scaleX(0.6803);">sneha@bimsym.com</div>
<div class="t" style="left:645.00px;top:99.05px;font-size:12.5px;color:#555b60;transform:scaleX(0.6803);">Thakkar, Sneha</div>
<div class="t" style="left:802.77px;top:99.05px;font-size:12.5px;color:#555b60;transform:scaleX(0.6803);">11-24-2023</div>
<div class="t" style="left:10.20px;top:124.40px;font-size:12.5px;color:#555b60;transform:scaleX(0.6803);">D Name Party</div>
<div class="t" style="left:151.80px;top:124.40px;font-size:12.5px;color:#555b60;transform:scaleX(0.6803);">DNP</div>
<div class="t" style="left:292.50px;top:124.40px;font-size:12.5px;color:#555b60;transform:scaleX(0.6803);">Party</div>
<div class="t" style="left:433.30px;top:124.40px;font-size:12.5px;color:#555b60;transform:scaleX(0.6803);">123+dhirendra@bimsym.com</div>
<div class="t" style="left:645.00px;top:124.40px;font-size:12.5px;color:#555b60;transform:scaleX(0.6803);">Dr, Dhirendra</div>
<div class="t" style="left:802.45px;top:124.40px;font-size:12.5px;color:#555b60;transform:scaleX(0.6803);">08-09-2023</div>
<div class="t" style="left:10.20px;top:149.35px;font-size:12.5px;color:#555b60;transform:scaleX(0.6803);">John Hancock Life Insurance</div>
<div class="t" style="left:10.20px;top:165.75px;font-size:12.5px;color:#555b60;transform:scaleX(0.6803);">Company USA</div>
<div class="t" style="left:151.80px;top:157.75px;font-size:12.5px;color:#555b60;transform:scaleX(0.6803);">Test</div>
<div class="t" style="left:292.50px;top:157.75px;font-size:12.5px;color:#555b60;transform:scaleX(0.6803);">test</div>
<div class="t" style="left:433.30px;top:157.75px;font-size:12.5px;color:#555b60;transform:scaleX(0.6803);">test@test.com</div>
<div class="t" style="left:645.00px;top:157.75px;font-size:12.5px;color:#555b60;transform:scaleX(0.6803);">Agent, Admin</div>
<div class="t" style="left:802.45px;top:157.75px;font-size:12.5px;color:#555b60;transform:scaleX(0.6803);">07-13-2023</div>
<div class="t" style="left:10.20px;top:190.75px;font-size:12.5px;color:#555b60;transform:scaleX(0.6803);">Massachusetts Mutual Life</div>
<div class="t" style="left:10.20px;top:207.15px;font-size:12.5px;color:#555b60;transform:scaleX(0.6803);">Insurance (HL)</div>
<div class="t" style="left:151.80px;top:199.15px;font-size:12.5px;color:#555b60;transform:scaleX(0.6803);">Test</div>
<div class="t" style="left:292.50px;top:199.15px;font-size:12.5px;color:#555b60;transform:scaleX(0.6803);">Test</div>
<div class="t" style="left:433.30px;top:199.15px;font-size:12.5px;color:#555b60;transform:scaleX(0.6803);">test4@test.com</div>
<div class="t" style="left:579.32px;top:199.15px;font-size:12.5px;color:#555b60;transform:scaleX(0.6803);">615-356-1700</div>
<div class="t" style="left:645.00px;top:199.15px;font-size:12.5px;color:#555b60;transform:scaleX(0.6803);">Agent, Admin</div>
<div class="t" style="left:802.45px;top:199.15px;font-size:12.5px;color:#555b60;transform:scaleX(0.6803);">05-22-2023</div>
<div class="t" style="left:10.20px;top:232.75px;font-size:12.5px;color:#555b60;transform:scaleX(0.6803);">Banner Life Insurance (Ethos Plus)</div>
<div class="t" style="left:151.80px;top:232.75px;font-size:12.5px;color:#555b60;transform:scaleX(0.6803);">Test</div>
<div class="t" style="left:292.50px;top:232.75px;font-size:12.5px;color:#555b60;transform:scaleX(0.6803);">Test</div>
<div class="t" style="left:433.30px;top:232.75px;font-size:12.5px;color:#555b60;transform:scaleX(0.6803);">test4@test.com</div>
<div class="t" style="left:579.32px;top:232.75px;font-size:12.5px;color:#555b60;transform:scaleX(0.6803);">615-356-1700</div>
<div class="t" style="left:645.00px;top:232.75px;font-size:12.5px;color:#555b60;transform:scaleX(0.6803);">Agent, Admin</div>
<div class="t" style="left:802.45px;top:232.75px;font-size:12.5px;color:#555b60;transform:scaleX(0.6803);">05-22-2023</div>
<div class="t" style="left:10.20px;top:257.95px;font-size:12.5px;color:#555b60;transform:scaleX(0.6803);">Banner Life Insurance Company</div>
<div class="t" style="left:10.20px;top:274.35px;font-size:12.5px;color:#555b60;transform:scaleX(0.6803);">(Ethos)</div>
<div class="t" style="left:151.80px;top:266.35px;font-size:12.5px;color:#555b60;transform:scaleX(0.6803);">Test</div>
<div class="t" style="left:292.50px;top:266.35px;font-size:12.5px;color:#555b60;transform:scaleX(0.6803);">Test</div>
<div class="t" style="left:433.30px;top:266.35px;font-size:12.5px;color:#555b60;transform:scaleX(0.6803);">test4@test.com</div>
<div class="t" style="left:579.32px;top:266.35px;font-size:12.5px;color:#555b60;transform:scaleX(0.6803);">615-356-1700</div>
<div class="t" style="left:645.00px;top:266.35px;font-size:12.5px;color:#555b60;transform:scaleX(0.6803);">Agent, Admin</div>
<div class="t" style="left:802.45px;top:266.35px;font-size:12.5px;color:#555b60;transform:scaleX(0.6803);">05-22-2023</div>
<div class="t" style="left:10.20px;top:299.65px;font-size:12.5px;color:#555b60;transform:scaleX(0.6803);">Standard Disability</div>
<div class="t" style="left:645.00px;top:299.65px;font-size:12.5px;color:#555b60;transform:scaleX(0.6803);">Agent, Admin</div>
<div class="t" style="left:802.45px;top:299.65px;font-size:12.5px;color:#555b60;transform:scaleX(0.6803);">03-15-2023</div>
<div class="t" style="left:10.20px;top:324.85px;font-size:12.5px;color:#555b60;transform:scaleX(0.6803);">Sagicor Life</div>
<div class="t" style="left:645.00px;top:324.85px;font-size:12.5px;color:#555b60;transform:scaleX(0.6803);">Agent, Admin</div>
<div class="t" style="left:802.45px;top:324.85px;font-size:12.5px;color:#555b60;transform:scaleX(0.6803);">03-15-2023</div>
<div class="t" style="left:10.20px;top:350.15px;font-size:12.5px;color:#555b60;transform:scaleX(0.6803);">SBLI-Afficiency</div>
<div class="t" style="left:645.00px;top:350.15px;font-size:12.5px;color:#555b60;transform:scaleX(0.6803);">Agent, Admin</div>
<div class="t" style="left:802.45px;top:350.15px;font-size:12.5px;color:#555b60;transform:scaleX(0.6803);">03-15-2023</div>
<div class="t" style="left:10.20px;top:374.85px;font-size:12.5px;color:#555b60;transform:scaleX(0.6803);">Savings Bank Mutual Life Ins Co of</div>
<div class="t" style="left:10.20px;top:391.25px;font-size:12.5px;color:#555b60;transform:scaleX(0.6803);">MA</div>
<div class="t" style="left:645.00px;top:383.25px;font-size:12.5px;color:#555b60;transform:scaleX(0.6803);">Agent, Admin</div>
<div class="t" style="left:802.45px;top:383.25px;font-size:12.5px;color:#555b60;transform:scaleX(0.6803);">03-15-2023</div>
<div class="t" style="left:10.20px;top:415.90px;font-size:12.5px;color:#555b60;transform:scaleX(0.6803);">Pruco Life Insurance Co. of New</div>
<div class="t" style="left:645.00px;top:424.30px;font-size:12.5px;color:#555b60;transform:scaleX(0.6803);">Agent, Admin</div>
<div class="t" style="left:802.45px;top:424.30px;font-size:12.5px;color:#555b60;transform:scaleX(0.6803);">03-15-2023</div>
</div>
<!-- scrollbar -->
<div class="a" style="left:942px;top:121.5px;width:9.6px;height:435.5px;background:#f1f1f1"></div>
<div class="a" style="left:942.2px;top:137.7px;width:8.8px;height:86.1px;background:#c1c1c1"></div>
<svg style="left:942.4px;top:127px" width="9" height="6" viewBox="0 0 9 6"><path d="M1.2 5 L4.5 1 L7.8 5z" fill="#a3a3a3"/></svg>
<svg style="left:942.4px;top:544.5px" width="9" height="6" viewBox="0 0 9 6"><path d="M1.8 1.3 L4.7 5 L7.6 1.3z" fill="#505050"/></svg>

<!-- highlight box -->
<div class="a" style="left:31.7px;top:144.4px;width:908.3px;height:39.3px;border:2px solid #d4121a;border-radius:2px"></div>

<!-- notification -->
<div class="a" style="left:313px;top:45px;width:270.5px;height:55px;border:2px solid #c8141e;border-radius:2px;background:#fff"></div>
<div class="a" style="left:323.9px;top:53.7px;width:4px;height:42.3px;background:#17991a;border-radius:1px"></div>
<div class="a" style="left:327.9px;top:54px;width:250.7px;height:42px;background:#e7eae7"></div>
<svg style="left:331.3px;top:66.9px" width="13" height="16" viewBox="0 0 13 16">
 <ellipse cx="6.3" cy="7.7" rx="6.3" ry="7.7" fill="#1a8a22"/>
 <path d="M3 8 L5.5 11 L10 4.6" fill="none" stroke="#ffffff" stroke-width="1.7" stroke-linecap="round" stroke-linejoin="round"/>
</svg>

<!-- footer -->
<div class="a" style="left:421.8px;top:560px;width:30.7px;height:27.7px;background:#faf9f9"></div>
<div class="a" style="left:421.6px;top:587.5px;width:31.2px;height:1px;background:#c9cccf"></div>
<svg style="left:440.8px;top:572.3px" width="8" height="4" viewBox="0 0 8 4"><path d="M0.3 0.2 L7.2 0.2 L3.75 3.6z" fill="#24506a"/></svg>
<div class="a" style="left:868.7px;top:565.5px;width:57.6px;height:22.7px;background:#f1f1f1;border-radius:3px"></div>
<div class="a" style="left:933px;top:564.8px;width:19.1px;height:24.8px;border-radius:50%;background:#1a76d0"></div>

<div class="a" style="left:961.5px;top:335px;width:1.5px;height:24px;background:#7a9fd6"></div>
<!-- bottom bar -->
<div class="a" style="left:0;top:607.4px;width:963px;height:4.6px;background:#3b4045"></div>
<div class="a" style="left:0;top:607.4px;width:80.6px;height:4.6px;background:#f0895b"></div>
<div class="a" style="left:24px;top:611px;width:56.6px;height:1px;background:#7a3f2a"></div>

<div class="t" style="left:34.60px;top:11.30px;font-size:13px;color:#e9f4ff;transform:scaleX(0.6447);-webkit-text-stroke:0.3px currentColor;">DASHBOARD</div>
<div class="t" style="left:104.50px;top:11.30px;font-size:13px;color:#e9f4ff;transform:scaleX(0.6100);-webkit-text-stroke:0.3px currentColor;">ASSOCIATES</div>
<div class="t" style="left:170.80px;top:11.30px;font-size:13px;color:#e9f4ff;transform:scaleX(0.6035);-webkit-text-stroke:0.3px currentColor;">CASES</div>
<div class="t" style="left:214.40px;top:11.30px;font-size:13px;color:#e9f4ff;transform:scaleX(0.6158);-webkit-text-stroke:0.3px currentColor;">TOOLS</div>
<div class="t" style="left:258.20px;top:11.30px;font-size:13px;color:#e9f4ff;transform:scaleX(0.6229);-webkit-text-stroke:0.3px currentColor;">SETUP</div>
<div class="t" style="left:301.80px;top:11.30px;font-size:13px;color:#e9f4ff;transform:scaleX(0.6536);-webkit-text-stroke:0.3px currentColor;">CAMPAIGN</div>
<div class="t" style="left:871.20px;top:11.40px;font-size:13px;color:#1e2a38;transform:scaleX(0.6116);-webkit-text-stroke:0.3px currentColor;">LIFE</div>
<div class="t" style="left:942.90px;top:11.60px;font-size:13px;color:#ffffff;transform:scaleX(0.6135);font-weight:700;">TS</div>
<div class="t" style="left:38.70px;top:45.70px;font-size:14px;color:#3a6fa9;transform:scaleX(0.7571);-webkit-text-stroke:0.3px currentColor;">Setup - Life - System Setup - Company</div>
<div class="t" style="left:350.30px;top:68.00px;font-size:12.8px;color:#3d9f37;transform:scaleX(0.7394);-webkit-text-stroke:0.25px currentColor;">Company updated successfully.</div>
<div class="t" style="left:568.00px;top:67.60px;font-size:12.5px;color:#3d9f37;transform:scaleX(0.8030);font-weight:700;">X</div>
<div class="t" style="left:49.60px;top:95.20px;font-size:12.5px;color:#4b80b8;transform:scaleX(0.7364);">Company</div>
<div class="t" style="left:388.60px;top:571.20px;font-size:12.5px;color:#5d6b70;transform:scaleX(0.7171);">Display</div>
<div class="t" style="left:425.20px;top:571.20px;font-size:12.5px;color:#333;transform:scaleX(0.6855);-webkit-text-stroke:0.2px currentColor;">100</div>
<div class="t" style="left:456.80px;top:571.20px;font-size:12.5px;color:#5d6b70;transform:scaleX(0.7197);">Entries</div>
<div class="t" style="left:875.80px;top:570.20px;font-size:12.5px;color:#7a7f84;transform:scaleX(0.6943);">Page 1 of 1</div>
<div class="t" style="left:939.71px;top:570.50px;font-size:13px;color:#ffffff;transform:scaleX(0.8000);font-weight:700;">1</div>
</body></html>
